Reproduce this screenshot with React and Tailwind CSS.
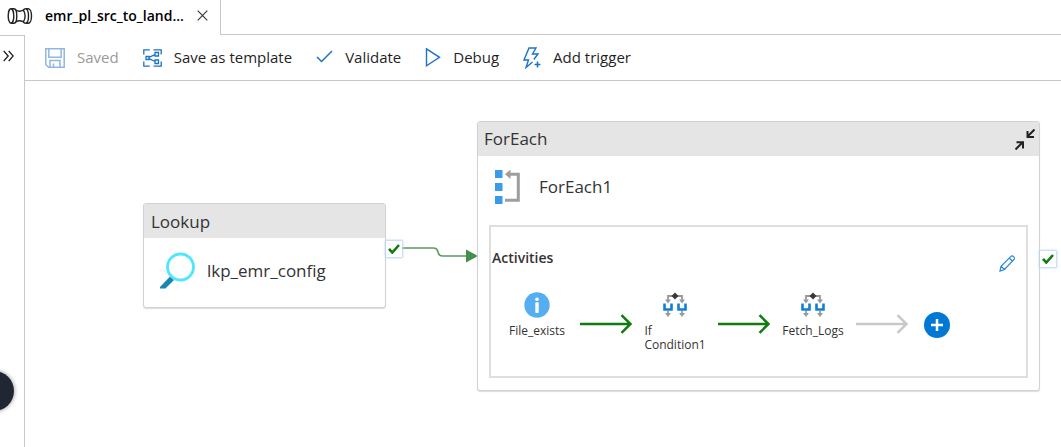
import React from "react";

function PipelineIcon() {
  return (
    <svg width="26" height="18" viewBox="0 0 26 18" fill="none" stroke="#222" strokeWidth="1.4">
      <ellipse cx="4" cy="9" rx="2.800" ry="7.200" />
      <path d="M4 1.800h3c1.700 0 2.800 3.200 2.800 7.200s-1.100 7.200-2.800 7.200H4" />
      <path d="M8.800 3.200c2 1.200 5.200 1.200 7.600 0M8.800 14.800c2-1.200 5.200-1.200 7.600 0" />
      <path d="M18.500 1.800c-.9 0-1.600.5-2.100 1.400 1.100 1.400 1.700 3.400 1.700 5.800s-.6 4.400-1.700 5.800c.5.9 1.200 1.400 2.100 1.400" />
      <path d="M18.300 1.800h3c1.800 0 3.200 3.200 3.200 7.200s-1.400 7.200-3.200 7.200h-3M19 1.800c1.600.6 2.500 3.600 2.500 7.200s-.9 6.600-2.500 7.200" />
    </svg>
  );
}

function CloseIcon() {
  return (
    <svg width="11" height="11" viewBox="0 0 11 11" stroke="#333" strokeWidth="1.1">
      <path d="M.7.7l9.600 9.600M10.300.7L.7 10.300" />
    </svg>
  );
}

function SaveIcon() {
  return (
    <svg width="20" height="20" viewBox="0 0 20 20" fill="none" stroke="#8fb8e0" strokeWidth="1.500">
      <path d="M.8.8h18.400v18.400H3.500L.8 16.500z" />
      <path d="M3.800 1v8.200h12.400V1M5 19v-6.500h10V19M8.500 19v-3.500" />
    </svg>
  );
}

function TemplateIcon() {
  return (
    <svg width="19" height="18" viewBox="0 0 19 18" fill="none" stroke="#1b74c5" strokeWidth="1.300">
      <path d="M.8 5.500V.8h6M10.500.8h7.700v4.700M.8 12.500v4.700h6M10.500 17.200h7.700v-4.700" />
      <path d="M3 7.500h3v3H3zM12 3.500h3.500V7H12zM12 11h3.500v3.500H12zM6 8.300l6-2.600M6 9.700l6 2.800" />
    </svg>
  );
}

function ValidateIcon() {
  return (
    <svg width="17" height="18" viewBox="0 0 17 18" fill="none" stroke="#1b74c5" strokeWidth="1.500">
      <path d="M1 8l4.500 4.500L16 2" />
    </svg>
  );
}

function PlayIcon() {
  return (
    <svg width="16" height="20" viewBox="0 0 16 20" fill="none" stroke="#1b74c5" strokeWidth="1.400">
      <path d="M1.500 .8v17L14.500 9.300z" />
    </svg>
  );
}

function TriggerIcon() {
  return (
    <svg width="18" height="22" viewBox="0 0 18 22" fill="none" stroke="#1b74c5" strokeWidth="1.400">
      <path d="M9.500 15L3 20.500l2.500-7.500H1L6 1h7L9.500 7h5.500l-4.200 5.500" />
      <path d="M14.500 14.500v6M11.500 17.500h6" strokeWidth="1.600" />
    </svg>
  );
}

function ExpandIcon() {
  return (
    <svg width="11" height="12" viewBox="0 0 11 12" fill="none" stroke="#222" strokeWidth="1.300">
      <path d="M.7 1l4.500 5-4.500 5M5.700 1l4.500 5-4.500 5" />
    </svg>
  );
}

function LookupIcon() {
  return (
    <svg width="36" height="38" viewBox="0 0 36 38" fill="none">
      <path d="M0 35L10 24.500l4 3.500L5.500 36.500H0z" fill="#1b86b4" />
      <circle cx="20.500" cy="15" r="13" stroke="#50e6ff" strokeWidth="2.800" />
    </svg>
  );
}

function LoopIcon() {
  return (
    <svg width="26" height="34" viewBox="0 0 26 34">
      <path d="M0 0h7.500v8H0zM0 13h7.500v8H0zM0 26h7.500v8H0z" fill="#3a9be8" />
      <path d="M15 4.200h8.300v26H10" fill="none" stroke="#9e9e9e" strokeWidth="3" />
      <path d="M10 4.200L15.500-.5v9.500z" fill="#9e9e9e" />
    </svg>
  );
}

function CollapseIcon() {
  return (
    <svg width="20" height="21" viewBox="0 0 20 21" fill="none" stroke="#222" strokeWidth="2">
      <path d="M19.500.5l-6.500 6.500M12.500 2v6H19M.5 20.500L7 14M1.500 13.200H8v6.300" />
    </svg>
  );
}

function PencilIcon() {
  return (
    <svg width="17" height="17" viewBox="0 0 17 17" fill="none" stroke="#2488d8" strokeWidth="1.200">
      <path d="M1 16l1-4.700L11.700 1.600c1-1 2.100-.8 2.900 0 1 .9 1.200 2 .2 3L5.500 14.500zM10.300 3l3.300 3.300M2 11.300l3.500 3.200" />
    </svg>
  );
}

function InfoIcon() {
  return (
    <svg width="26" height="26" viewBox="0 0 26 26">
      <circle cx="13" cy="13" r="12.700" fill="#55aef0" />
      <circle cx="13" cy="7.300" r="1.800" fill="#fff" />
      <rect x="11.300" y="10.300" width="3.400" height="10.700" rx="1" fill="#fff" />
    </svg>
  );
}

function ConditionIcon() {
  return (
    <svg width="24" height="26" viewBox="0 0 24 26" fill="none">
      <path d="M5 9V4h14v5M5 19v4M19 19v4" stroke="#999" strokeWidth="1.800" />
      <path d="M2 7.500h6L5 11.500zM16 7.500h6l-3 4zM2 21h6l-3 4zM16 21h6l-3 4z" fill="#999" />
      <path d="M1.500 11.500v6h7v-6M15.500 11.500v6h7v-6" stroke="#0f80d8" strokeWidth="2.600" />
      <path d="M12 .5L15.500 4 12 7.500 8.500 4z" fill="#3a3a3a" />
    </svg>
  );
}

function FlowArrow({ color }) {
  return (
    <svg className="mt-[22px] shrink-0" width="52" height="20" viewBox="0 0 52 20" fill="none" stroke={color} strokeWidth="2.500">
      <path d="M0 10h50M41.500 1.200L50.500 10l-9 8.800" />
    </svg>
  );
}

function SuccessBadge() {
  return (
    <span className="flex size-4 items-center justify-center bg-white shadow-[0_0_2px_1px_#b4d3f2]">
      <svg width="12" height="10" viewBox="0 0 12 10" fill="none" stroke="#107c10" strokeWidth="2.600">
        <path d="M1 4.800l3.300 3.700L11 1" />
      </svg>
    </span>
  );
}

function ToolButton({ icon, label, disabled }) {
  return (
    <button
      type="button"
      disabled={disabled}
      className="flex items-center gap-3 whitespace-nowrap text-[#1f1f1f] disabled:text-[#9a9a9a]"
    >
      {icon}
      {label}
    </button>
  );
}

function Activity({ icon, name }) {
  return (
    <li className="flex w-15 shrink-0 flex-col items-center gap-[6px]">
      {icon}
      <span className="text-xs leading-[14px]">{name}</span>
    </li>
  );
}

export default function App() {
  return (
    <div className="flex min-h-screen flex-col bg-white font-['Open_Sans','Noto_Sans',sans-serif] text-[#333]">
      <header className="flex h-[35px]">
        <div className="flex w-[221px] items-center border-r border-[#c8c8c8] pr-3 pb-1 pl-[7px]">
          <PipelineIcon />
          <a href="#pipeline" className="ml-3 flex-1 truncate text-sm font-semibold text-black">
            emr_pl_src_to_land...
          </a>
          <button type="button" aria-label="Close tab">
            <CloseIcon />
          </button>
        </div>
        <div className="flex-1 border-b border-[#c8c8c8]" />
      </header>

      <div className="flex flex-1">
        <aside className="relative w-[25px] shrink-0 overflow-hidden border-t border-r border-[#c8c8c8]">
          <button type="button" aria-label="Expand panel" className="mt-[14px] ml-[3px] block">
            <ExpandIcon />
          </button>
          <button
            type="button"
            aria-label="Open assistant"
            className="absolute bottom-9 -left-[26px] size-10 rounded-full bg-[#212633] shadow-[0_0_3px_2px_#d0d0d0]"
          />
        </aside>

        <main className="flex min-w-0 flex-1 flex-col">
          <div className="flex h-[46px] items-center gap-6 border-b border-[#c8c8c8] pl-5 text-[15px]">
            <ToolButton icon={<SaveIcon />} label="Saved" disabled />
            <ToolButton icon={<TemplateIcon />} label="Save as template" />
            <ToolButton icon={<ValidateIcon />} label="Validate" />
            <ToolButton icon={<PlayIcon />} label="Debug" />
            <ToolButton icon={<TriggerIcon />} label="Add trigger" />
          </div>

          <div className="relative flex-1 overflow-hidden">
            <svg className="absolute top-[160px] left-[376px]" width="78" height="24" viewBox="0 0 78 24" fill="none">
              <path d="M0 7h32c4 0 4 1.500 5 4s1 4 5 4h24" stroke="#5a9a5e" strokeWidth="1.600" />
              <path d="M65 8.500v13L77 15z" fill="#43904a" />
            </svg>

            <section className="absolute top-[122px] left-[118px] w-[243px] rounded-[3px] border border-[#d2d2d2] bg-white shadow-[0_1px_1px_#ddd]">
              <h2 className="h-[34px] bg-[#e5e5e5] px-[7px] text-[17px] leading-9">Lookup</h2>
              <div className="flex h-[69px] items-center gap-[11px] pb-1 pl-4 text-[17px]">
                <LookupIcon />
                lkp_emr_config
              </div>
            </section>
            <div className="absolute top-[160px] left-[361px]">
              <SuccessBadge />
            </div>

            <section className="absolute top-[40px] left-[452px] w-[563px] rounded-[3px] border border-[#d2d2d2] bg-white px-[11px] pb-3 shadow-[0_1px_1px_#ddd]">
              <div className="-mx-[11px] flex h-[34px] items-center justify-between bg-[#e5e5e5] pr-1 pl-[6px]">
                <h2 className="text-[17px] leading-9">ForEach</h2>
                <button type="button" aria-label="Collapse">
                  <CollapseIcon />
                </button>
              </div>
              <div className="flex h-[69px] items-center gap-[18px] pb-2 pl-[6px] text-[17px]">
                <LoopIcon />
                ForEach1
              </div>
              <div className="h-[153px] border-2 border-[#dedede] pt-[21px]">
                <div className="flex h-6 justify-between pr-[10px] pl-px">
                  <h3 className="text-sm font-semibold leading-5">Activities</h3>
                  <button type="button" aria-label="Edit activities" className="self-end">
                    <PencilIcon />
                  </button>
                </div>
                <ul className="mt-5 flex gap-[13px] pl-4">
                  <Activity icon={<InfoIcon />} name="File_exists" />
                  <FlowArrow color="#107c10" />
                  <Activity icon={<ConditionIcon />} name="If Condition1" />
                  <FlowArrow color="#107c10" />
                  <Activity icon={<ConditionIcon />} name="Fetch_Logs" />
                  <FlowArrow color="#c8c8c8" />
                  <li className="mt-5">
                    <button
                      type="button"
                      aria-label="Add activity"
                      className="ml-[3px] flex size-[26px] items-center justify-center rounded-full bg-[#0078d4]"
                    >
                      <svg width="12" height="12" viewBox="0 0 12 12" stroke="#fff" strokeWidth="2.500">
                        <path d="M6 0v12M0 6h12" />
                      </svg>
                    </button>
                  </li>
                </ul>
              </div>
            </section>
            <div className="absolute top-[170px] left-[1015px]">
              <SuccessBadge />
            </div>
          </div>
        </main>
      </div>
    </div>
  );
}
